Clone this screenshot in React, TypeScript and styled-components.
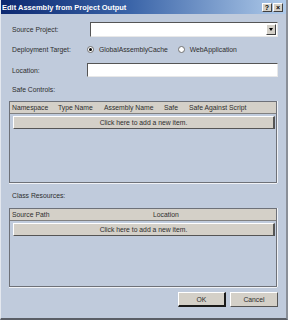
import React from "react";
import styled, { createGlobalStyle } from "styled-components";

const Global = createGlobalStyle`
  html, body { margin: 0; padding: 0; background: #c0cbdc; }
  * { box-sizing: border-box; }
`;

const Window = styled.div`
  width: 288px;
  height: 320px;
  background: #c0cbdc;
  font-family: "Liberation Sans", Arial, sans-serif;
  font-size: 6.8px;
  color: #2e2e2e;
  display: flex;
  flex-direction: column;
  border-left: 1px solid #e4e8ef;
  border-right: 2px solid #8a8f98;
  border-bottom: 2px solid #5a5e66;
  overflow: hidden;
`;

const TitleBar = styled.div`
  height: 14px;
  flex: none;
  display: flex;
  align-items: center;
  padding: 0 3px 0 1px;
  background: linear-gradient(to right, #0c2870 0%, #3a64a8 45%, #b0cbea 100%);
`;

const Title = styled.div`
  flex: 1;
  color: #fff;
  font-weight: bold;
  font-size: 7.5px;
  white-space: nowrap;
`;

const CaptionButton = styled.div`
  width: 10px;
  height: 9px;
  margin-left: 1px;
  background: #d4d0c8;
  border-top: 1px solid #fff;
  border-left: 1px solid #fff;
  border-right: 1px solid #404040;
  border-bottom: 1px solid #404040;
  color: #000;
  font-weight: bold;
  font-size: 7px;
  line-height: 7px;
  text-align: center;
`;

const Body = styled.div`
  flex: 1;
  display: flex;
  flex-direction: column;
  padding: 8px 8px 0 8px;
`;

const FormRow = styled.div<{ $h: number; $mb: number }>`
  display: flex;
  align-items: center;
  height: ${(p) => p.$h}px;
  margin-bottom: ${(p) => p.$mb}px;
`;

const Label = styled.div`
  width: 78px;
  padding-left: 3px;
  flex: none;
  white-space: nowrap;
`;

const TextBox = styled.div<{ $ml?: number }>`
  flex: 1;
  height: 100%;
  margin-left: ${(p) => p.$ml || 0}px;
  background: #fff;
  border-top: 1px solid #555;
  border-left: 1px solid #555;
  border-right: 1px solid #e8e8e8;
  border-bottom: 1px solid #e8e8e8;
  display: flex;
  justify-content: flex-end;
  align-items: stretch;
  padding: 1px;
`;

const DropButton = styled.div`
  width: 10px;
  background: #d4d0c8;
  border-top: 1px solid #fff;
  border-left: 1px solid #fff;
  border-right: 1px solid #404040;
  border-bottom: 1px solid #404040;
  display: flex;
  align-items: center;
  justify-content: center;
`;

const Arrow = styled.div`
  width: 0;
  height: 0;
  border-left: 2.5px solid transparent;
  border-right: 2.5px solid transparent;
  border-top: 3px solid #000;
`;

const Radio = styled.div<{ $on?: boolean }>`
  width: 7px;
  height: 7px;
  border-radius: 50%;
  background: #fff;
  border: 1px solid #707070;
  display: flex;
  align-items: center;
  justify-content: center;
  margin-right: 5px;
  &::after {
    content: "";
    width: 3px;
    height: 3px;
    border-radius: 50%;
    background: ${(p) => (p.$on ? "#000" : "transparent")};
  }
`;

const RadioLabel = styled.div<{ $mr?: number }>`
  margin-right: ${(p) => p.$mr || 0}px;
  white-space: nowrap;
`;

const SectionLabel = styled.div<{ $h: number }>`
  height: ${(p) => p.$h}px;
  display: flex;
  align-items: center;
  padding-left: 3px;
`;

const Grid = styled.div<{ $h: number }>`
  height: ${(p) => p.$h}px;
  border: 1px solid #6e7178;
  box-shadow: 0 1px 0 #f0f2f6, 1px 0 0 #f0f2f6;
  display: flex;
  flex-direction: column;
  margin-right: 1px;
`;

const HeaderRow = styled.div`
  height: 12px;
  flex: none;
  background: #d4d0c8;
  border-bottom: 1px solid #808080;
  display: flex;
  align-items: center;
`;

const HeaderCell = styled.div<{ $w?: number }>`
  width: ${(p) => (p.$w ? `${p.$w}px` : "auto")};
  flex: ${(p) => (p.$w ? "none" : "1")};
  padding-left: 2px;
  white-space: nowrap;
`;

const AddRow = styled.div`
  height: 13px;
  margin: 2px 1px 0 3px;
  background: #d4d0c8;
  border-top: 1px solid #fff;
  border-left: 1px solid #fff;
  border-right: 2px solid #555;
  border-bottom: 1px solid #555;
  display: flex;
  align-items: center;
  justify-content: center;
`;

const Footer = styled.div`
  display: flex;
  justify-content: flex-end;
  gap: 4px;
  margin-top: 5px;
  padding-right: 0;
`;

const Button = styled.div<{ $default?: boolean }>`
  width: 48px;
  height: 15px;
  background: #d4d0c8;
  border-top: 1px solid #fff;
  border-left: 1px solid #fff;
  border-right: ${(p) => (p.$default ? "2px solid #1a1a1a" : "1px solid #555")};
  border-bottom: ${(p) => (p.$default ? "2px solid #1a1a1a" : "1px solid #555")};
  display: flex;
  align-items: center;
  justify-content: center;
`;

export default function App() {
  return (
    <>
      <Global />
      <Window>
        <TitleBar>
          <Title>Edit Assembly from Project Output</Title>
          <CaptionButton>?</CaptionButton>
          <CaptionButton>×</CaptionButton>
        </TitleBar>
        <Body>
          <FormRow $h={15} $mb={6}>
            <Label>Source Project:</Label>
            <TextBox $ml={3}>
              <DropButton>
                <Arrow />
              </DropButton>
            </TextBox>
          </FormRow>
          <FormRow $h={13} $mb={7}>
            <Label>Deployment Target:</Label>
            <Radio $on />
            <RadioLabel $mr={10}>GlobalAssemblyCache</RadioLabel>
            <Radio />
            <RadioLabel>WebApplication</RadioLabel>
          </FormRow>
          <FormRow $h={14} $mb={0}>
            <Label>Location:</Label>
            <TextBox />
          </FormRow>
          <SectionLabel $h={24}>Safe Controls:</SectionLabel>
          <Grid $h={82}>
            <HeaderRow>
              <HeaderCell $w={46}>Namespace</HeaderCell>
              <HeaderCell $w={46}>Type Name</HeaderCell>
              <HeaderCell $w={60}>Assembly Name</HeaderCell>
              <HeaderCell $w={25}>Safe</HeaderCell>
              <HeaderCell>Safe Against Script</HeaderCell>
            </HeaderRow>
            <AddRow>Click here to add a new item.</AddRow>
          </Grid>
          <SectionLabel $h={25}>Class Resources:</SectionLabel>
          <Grid $h={79}>
            <HeaderRow>
              <HeaderCell $w={141}>Source Path</HeaderCell>
              <HeaderCell>Location</HeaderCell>
            </HeaderRow>
            <AddRow>Click here to add a new item.</AddRow>
          </Grid>
          <Footer>
            <Button $default>OK</Button>
            <Button>Cancel</Button>
          </Footer>
        </Body>
      </Window>
    </>
  );
}
